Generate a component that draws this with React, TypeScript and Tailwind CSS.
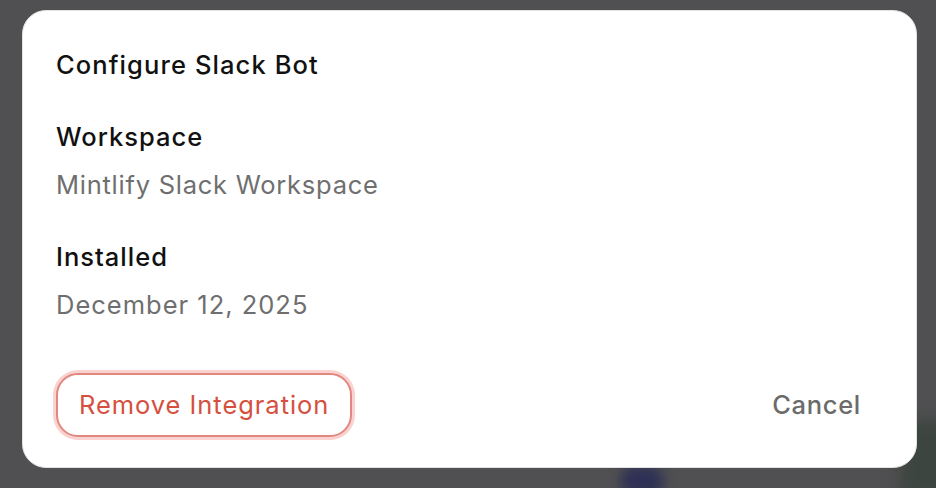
import React from "react";

export default function App() {
  return (
    <div
      className="relative w-[936px] h-[488px] overflow-hidden bg-[#505052]"
      style={{ fontFamily: "Inter, 'Noto Sans', sans-serif" }}
    >
      <div className="absolute left-[620px] top-[466px] w-[44px] h-[30px] rounded-full bg-[#2e3155] blur-[6px]" />
      <div className="absolute left-[900px] top-[420px] w-[60px] h-[80px] bg-[#3d4540] blur-[8px]" />
      <div className="absolute left-[22px] top-[10px] w-[895px] h-[458px] rounded-[24px] bg-white border border-[#e2e2e2] flex flex-col px-[33px]">
        <div className="pt-[38px] text-[25.5px] leading-[32px] font-medium text-[#111] tracking-[1.1px]">
          Configure Slack Bot
        </div>
        <div className="mt-[40px] text-[25.5px] leading-[32px] font-medium text-[#111] tracking-[1px]">Workspace</div>
        <div className="mt-[16px] text-[25.5px] leading-[32px] text-[#6f6f6f] tracking-[0.75px]">Mintlify Slack Workspace</div>
        <div className="mt-[40px] text-[25.5px] leading-[32px] font-medium text-[#111] tracking-[1px]">Installed</div>
        <div className="mt-[16px] text-[25.5px] leading-[32px] text-[#6f6f6f] tracking-[1px]">December 12, 2025</div>
        <div className="mt-[52px] flex items-center justify-between">
          <button className="h-[64px] px-[21px] rounded-[22px] border-2 border-[#e2877f] ring-[3px] ring-[#fad3d0] text-[25.5px] tracking-[0.95px] text-[#d5503f] bg-white">
            Remove Integration
          </button>
          <button className="mr-[22px] text-[25.5px] font-medium tracking-[0.7px] text-[#6b6b6b]">Cancel</button>
        </div>
      </div>
    </div>
  );
}
